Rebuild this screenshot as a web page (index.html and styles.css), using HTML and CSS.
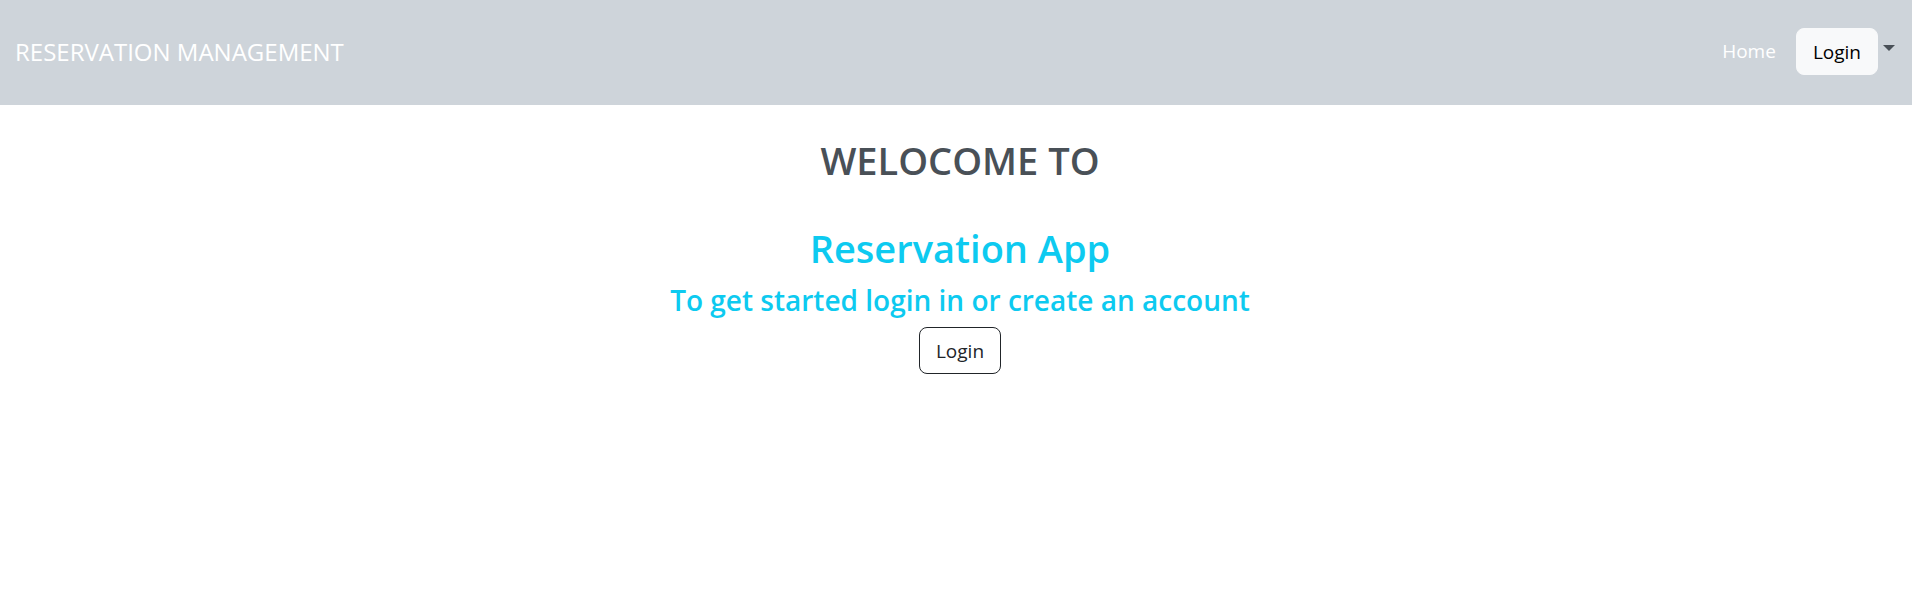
FILE: index.html
```html
<!DOCTYPE html>
<html lang="en">
<head>
<meta charset="utf-8">
<title>Reservation Management</title>
<link rel="stylesheet" href="styles.css">
</head>
<body>
<nav class="navbar">
  <a class="brand" href="#">RESERVATION MANAGEMENT</a>
  <div class="nav-links">
    <a class="nav-link" href="#">Home</a>
    <div class="dropdown">
      <button class="btn btn-light" type="button">Login</button>
      <button class="caret" type="button" aria-label="Open login menu"></button>
    </div>
  </div>
</nav>
<main class="welcome">
  <h1 class="title">WELOCOME TO</h1>
  <h1 class="app-name">Reservation App</h1>
  <h2 class="lead">To get started login in or create an account</h2>
  <button class="btn btn-outline" type="button">Login</button>
</main>
</body>
</html>
```
FILE: styles.css
```css
* { box-sizing: border-box; }

body {
  margin: 0;
  background: #fff;
  color: #212529;
  font-family: "Segoe UI", "Open Sans", "Noto Sans", sans-serif;
  font-size: 19px;
  line-height: 29px;
}

.navbar {
  display: flex;
  align-items: center;
  justify-content: space-between;
  padding: 28px 17px 30px 15px;
  background: #ced4da;
}

.brand {
  color: #fff;
  font-size: 24px;
  text-decoration: none;
}

.nav-links {
  display: flex;
  align-items: center;
  gap: 20px;
}

.nav-link {
  color: #fff;
  text-decoration: none;
}

.dropdown {
  display: flex;
  align-items: flex-start;
  gap: 5px;
}

.btn {
  padding: 9px 16px 7px;
  border: 1px solid;
  border-radius: 8px;
  font: inherit;
}

.btn-light {
  border-color: #f8f9fa;
  background: #f8f9fa;
  color: #000;
}

.caret {
  width: 12px;
  height: 6px;
  margin-top: 17px;
  padding: 0;
  border: 6px solid transparent;
  border-top-color: #495057;
  border-bottom: 0;
  background: none;
}

.welcome {
  display: flex;
  flex-direction: column;
  align-items: center;
  padding: 31px 0 0 8px;
}

.title,
.app-name,
.lead {
  margin: 0;
  font-weight: 600;
}

.title {
  margin-bottom: 40px;
  color: #495057;
  font-size: 38px;
  line-height: 48px;
}

.app-name {
  margin-bottom: 10px;
  color: #0dcaf0;
  font-size: 38px;
  line-height: 48px;
}

.lead {
  margin-bottom: 9px;
  color: #0dcaf0;
  font-size: 28px;
  line-height: 36px;
}

.btn-outline {
  border-color: #212529;
  background: transparent;
  color: #212529;
}
```
